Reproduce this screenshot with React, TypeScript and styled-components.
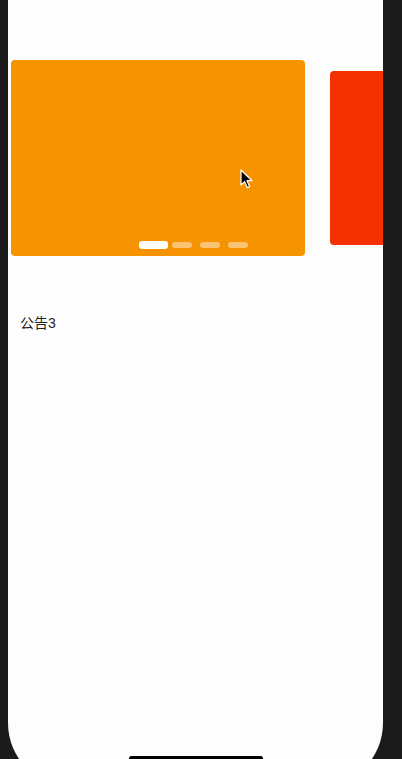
import * as React from "react";
import styled, { createGlobalStyle } from "styled-components";

const slides = [
  { color: "#f59300" },
  { color: "#f23000" },
  { color: "#f5c400" },
  { color: "#2f9bf0" }
];

const App: React.FC = (): JSX.Element => {
  const active = 0;

  return (
    <>
      <GlobalStyle />
      <Stage>
        <Screen>
          <Carousel>
            <Track>
              {slides.slice(0, 2).map((slide, index) => (
                <Slide key={index} color={slide.color} $active={index === active}>
                  {index === active && (
                    <Dots>
                      {slides.map((_, dotIndex) => (
                        <Dot key={dotIndex} $active={dotIndex === active} />
                      ))}
                    </Dots>
                  )}
                </Slide>
              ))}
            </Track>
          </Carousel>

          <Notice>公告3</Notice>

          <HomeIndicator />
        </Screen>

        <Cursor width="13" height="20" viewBox="0 0 13 20">
          <path
            d="M1 1 L1 16 L4.6 12.6 L7.2 18.6 L9.6 17.6 L7 11.7 L12 11.7 Z"
            fill="#000"
            stroke="#fff"
            strokeWidth="1.2"
            strokeLinejoin="round"
          />
        </Cursor>
      </Stage>
    </>
  );
};

export default App;

const GlobalStyle = createGlobalStyle`
  html, body {
    margin: 0;
    padding: 0;
    background: #1b1b1b;
  }

  body {
    font-family: "Liberation Sans", "Noto Sans CJK SC", sans-serif;
    overflow: hidden;
  }
`;

const Stage = styled.div`
  position: relative;
  width: 402px;
  height: 759px;
  overflow: hidden;
  padding-left: 8px;
  box-sizing: border-box;
  background: #1b1b1b;
`;

const Screen = styled.div`
  display: flex;
  flex-direction: column;
  width: 375px;
  height: 787px;
  padding-bottom: 26px;
  box-sizing: border-box;
  background: #fdfdfd;
  border-radius: 0 0 64px 64px;
  overflow: hidden;
`;

const Carousel = styled.div`
  padding-top: 60px;
  overflow: hidden;
`;

const Track = styled.div`
  display: flex;
  align-items: center;
  gap: 25px;
  padding-left: 3px;
`;

const Slide = styled.div<{ color: string; $active: boolean }>`
  position: relative;
  flex: 0 0 auto;
  width: ${p => (p.$active ? 294 : 262)}px;
  height: ${p => (p.$active ? 196 : 174)}px;
  background: ${p => p.color};
  border-radius: 4px;
`;

const Dots = styled.div`
  position: absolute;
  left: 128px;
  bottom: 7px;
  display: flex;
  align-items: center;
  gap: 8px;
`;

const Dot = styled.span<{ $active: boolean }>`
  display: block;
  width: ${p => (p.$active ? 29 : 20)}px;
  height: ${p => (p.$active ? 8 : 6)}px;
  margin-right: ${p => (p.$active ? -4 : 0)}px;
  border-radius: 3px;
  background: ${p => (p.$active ? "#ffffff" : "rgba(255, 255, 255, 0.45)")};
`;

const Notice = styled.div`
  margin-top: 57px;
  padding-left: 12px;
  font-size: 14px;
  line-height: 20px;
  color: #1f1f1f;
`;

const HomeIndicator = styled.div`
  align-self: center;
  margin-top: auto;
  width: 134px;
  height: 5px;
  border-radius: 3px;
  background: #000;
`;

const Cursor = styled.svg`
  position: absolute;
  left: 240px;
  top: 169px;
`;
